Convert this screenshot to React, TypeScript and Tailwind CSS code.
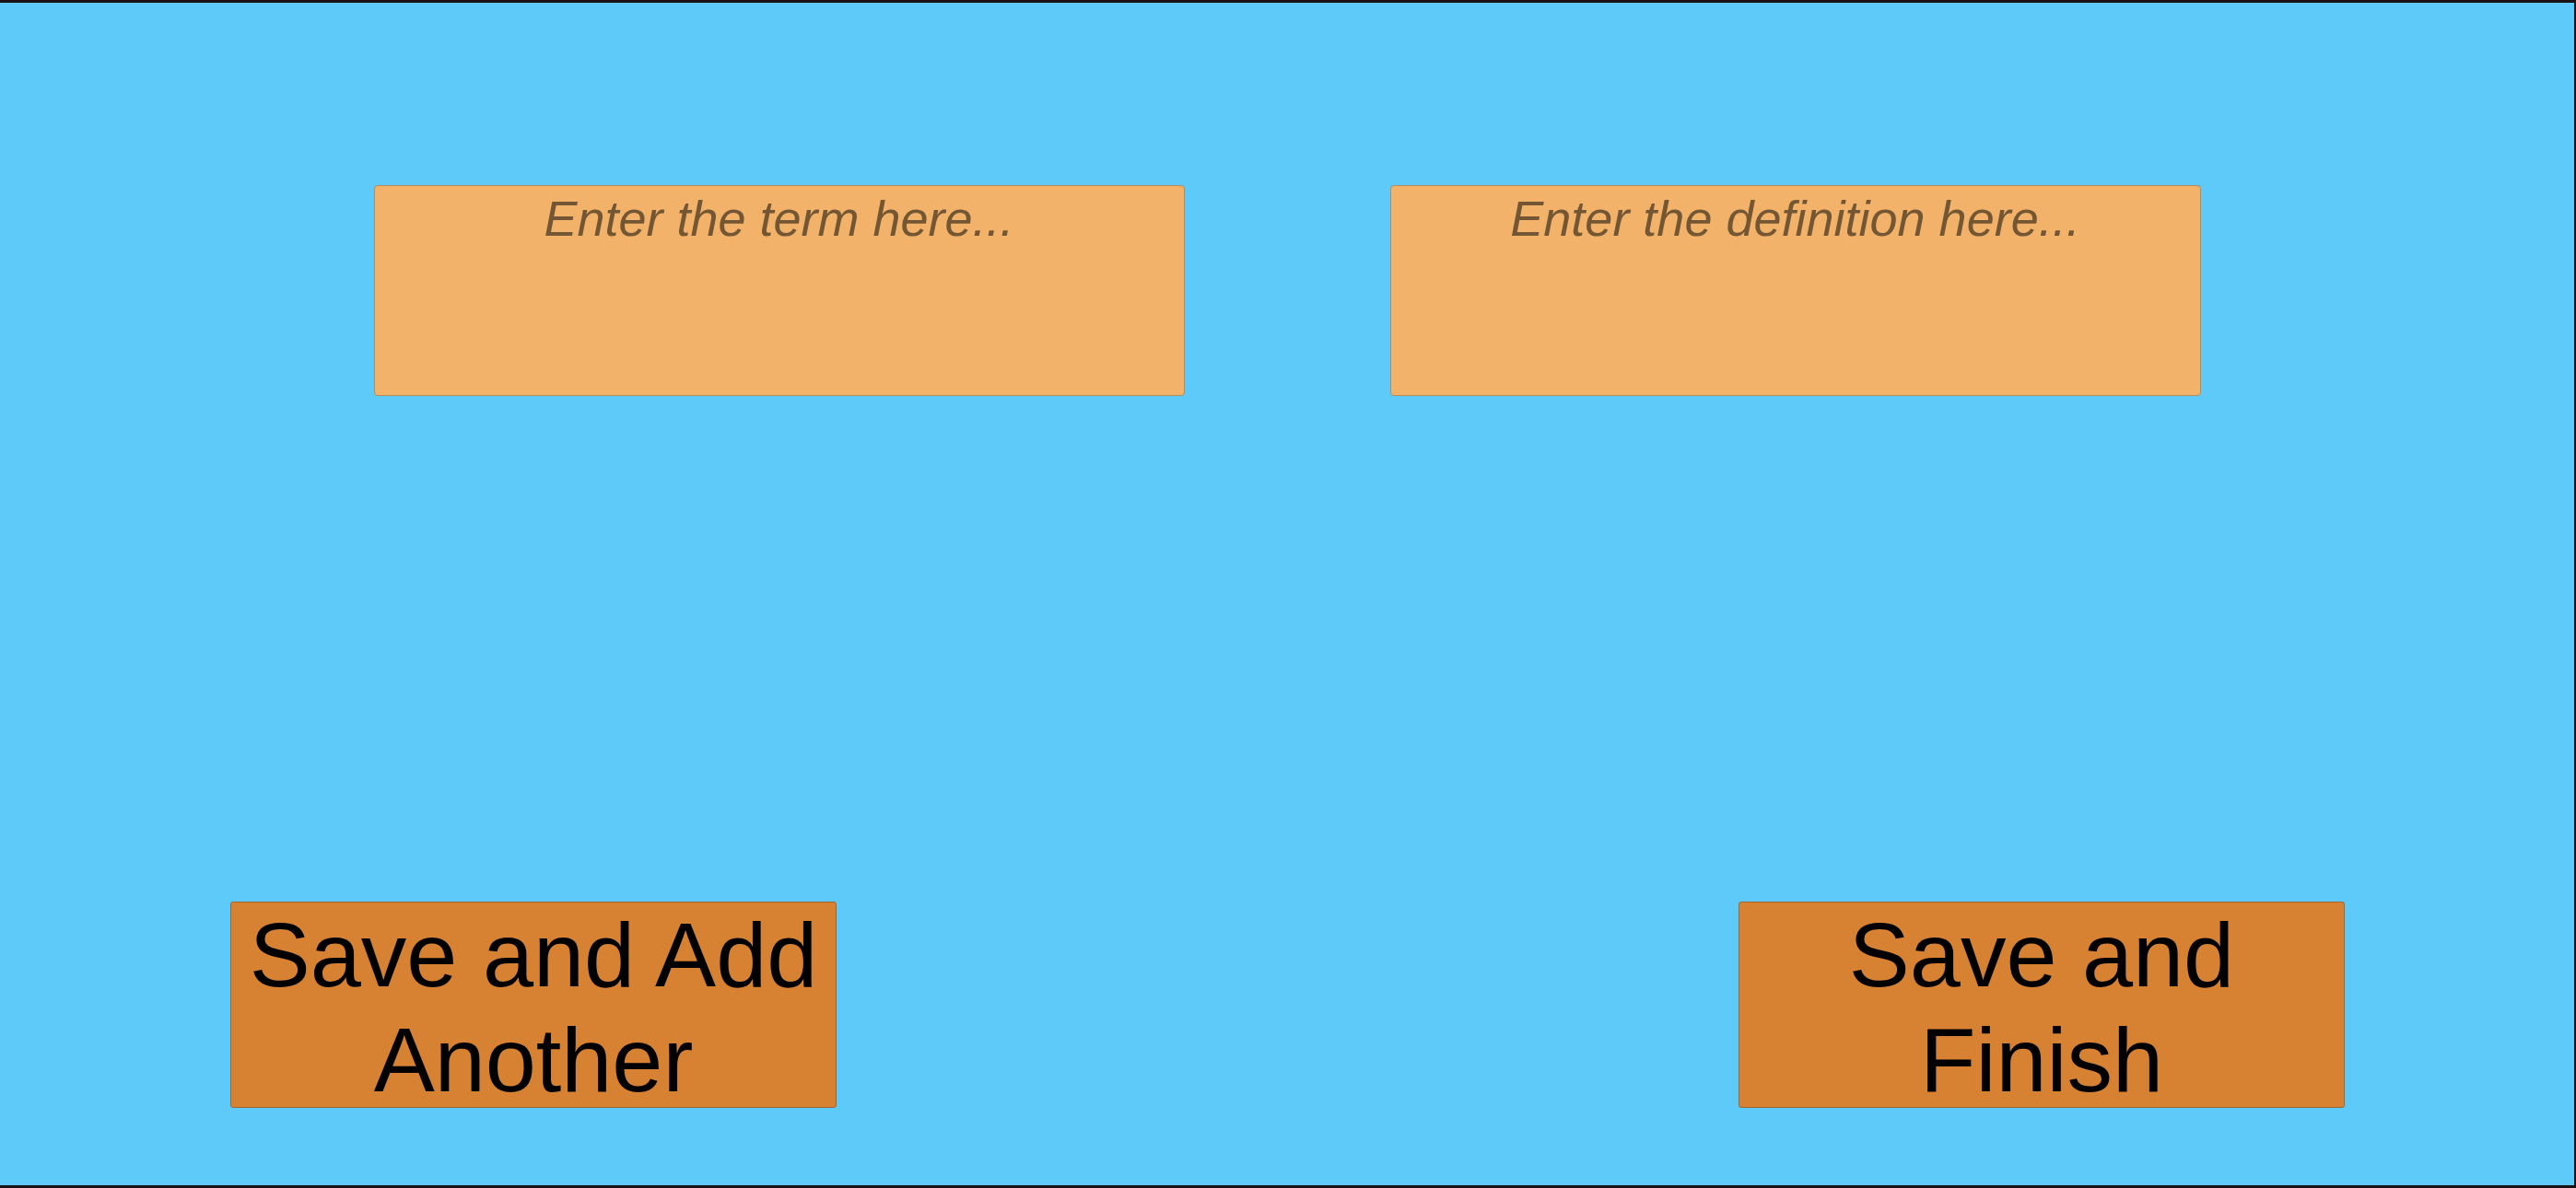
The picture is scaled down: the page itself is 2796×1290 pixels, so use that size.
import React, { useState } from "react";

// Flashcard entry screen: term + definition fields and two save buttons

interface EntryBoxProps {
  placeholder: string;
  value: string;
  onChange: (e: React.ChangeEvent<HTMLTextAreaElement>) => void;
}

const EntryBox = ({ placeholder, value, onChange }: EntryBoxProps) => {
  return (
    <textarea
      placeholder={placeholder}
      value={value}
      onChange={onChange}
      className="w-[880px] h-[229px] resize-none bg-[#f3b26a] border border-[#b58a5c] rounded-[4px] pt-[4px] px-4 text-center text-[54px] leading-[normal] italic text-[#3a2a18] placeholder:text-[#735633] placeholder:opacity-100 outline-none font-['Liberation_Sans',Arial,sans-serif]"
    />
  );
};

const BigButton = ({ label }: { label: string }) => {
  return (
    <button
      type="button"
      className="w-[658px] h-[224px] flex items-start justify-center bg-[#d78133] border border-[#a2652c] rounded-[3px] px-2 text-black text-[99px] leading-[normal] text-center font-['Liberation_Sans',Arial,sans-serif]"
    >
      {label}
    </button>
  );
};

export default function App() {
  const [term, setTerm] = useState("");
  const [definition, setDefinition] = useState("");

  return (
    <div className="w-full h-[1290px] bg-[#5ecaf9] border-t-[3px] border-b-[3px] border-r-2 border-[#1b1313] overflow-hidden">
      {/* Input fields */}
      <div className="flex justify-center gap-[223px] pt-[198px]">
        <EntryBox
          placeholder="Enter the term here..."
          value={term}
          onChange={(e) => setTerm(e.target.value)}
        />
        <EntryBox
          placeholder="Enter the definition here..."
          value={definition}
          onChange={(e) => setDefinition(e.target.value)}
        />
      </div>

      {/* Action buttons */}
      <div className="flex justify-between pl-[250px] pr-[249px] mt-[549px]">
        <BigButton label="Save and Add Another" />
        <BigButton label="Save and Finish" />
      </div>
    </div>
  );
}
